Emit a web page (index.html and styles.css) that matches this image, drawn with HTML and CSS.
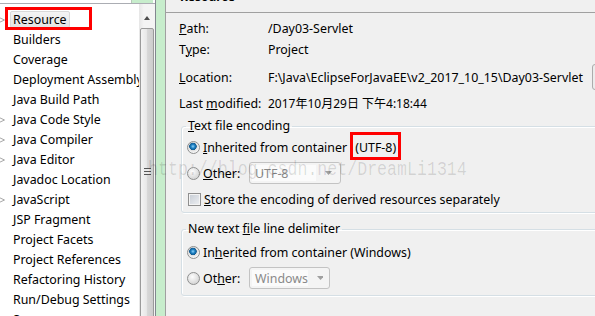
FILE: index.html
```html
<!DOCTYPE html>
<html lang="en">
<head>
    <meta charset="UTF-8">
    <title>Properties for Day03-Servlet</title>
    <link rel="stylesheet" href="styles.css">
</head>
<body>
    <div class="window">
        <!-- Property page tree -->
        <div class="tree-pane">
            <div class="filter"><span class="filter-btn"></span></div>
            <div class="tree-body">
                <ul class="tree">
                    <li class="tree-item">
                        <span class="twisty"><svg width="13" height="20"><polygon points="-3,7.5 4.5,11 -3,14.5" fill="#fff" stroke="#a8a8a8"/></svg></span>
                        <span class="label selected">Resource</span>
                        <span class="mark mark-tree"></span>
                    </li>
                    <li class="tree-item"><span class="twisty"></span><span class="label">Builders</span></li>
                    <li class="tree-item"><span class="twisty"></span><span class="label">Coverage</span></li>
                    <li class="tree-item"><span class="twisty"></span><span class="label">Deployment Assembly</span></li>
                    <li class="tree-item"><span class="twisty"></span><span class="label">Java Build Path</span></li>
                    <li class="tree-item">
                        <span class="twisty"><svg width="13" height="20"><polygon points="-3,7.5 4.5,11 -3,14.5" fill="#fff" stroke="#a8a8a8"/></svg></span>
                        <span class="label">Java Code Style</span>
                    </li>
                    <li class="tree-item">
                        <span class="twisty"><svg width="13" height="20"><polygon points="-3,7.5 4.5,11 -3,14.5" fill="#fff" stroke="#a8a8a8"/></svg></span>
                        <span class="label">Java Compiler</span>
                    </li>
                    <li class="tree-item">
                        <span class="twisty"><svg width="13" height="20"><polygon points="-3,7.5 4.5,11 -3,14.5" fill="#fff" stroke="#a8a8a8"/></svg></span>
                        <span class="label">Java Editor</span>
                    </li>
                    <li class="tree-item"><span class="twisty"></span><span class="label">Javadoc Location</span></li>
                    <li class="tree-item">
                        <span class="twisty"><svg width="13" height="20"><polygon points="-3,7.5 4.5,11 -3,14.5" fill="#fff" stroke="#a8a8a8"/></svg></span>
                        <span class="label">JavaScript</span>
                    </li>
                    <li class="tree-item"><span class="twisty"></span><span class="label">JSP Fragment</span></li>
                    <li class="tree-item"><span class="twisty"></span><span class="label">Project Facets</span></li>
                    <li class="tree-item"><span class="twisty"></span><span class="label">Project References</span></li>
                    <li class="tree-item"><span class="twisty"></span><span class="label">Refactoring History</span></li>
                    <li class="tree-item"><span class="twisty"></span><span class="label">Run/Debug Settings</span></li>
                    <li class="tree-item"><span class="twisty"></span><span class="label">Server</span></li>
                </ul>
                <div class="scrollbar">
                    <div class="scroll-up">
                        <svg width="16" height="18"><polygon points="5,11 11,11 8,7" fill="#4d4d4d"/></svg>
                    </div>
                    <div class="scroll-thumb"><span class="grip"></span></div>
                </div>
            </div>
        </div>

        <div class="gutter"></div>

        <!-- Resource property page -->
        <div class="page">
            <div class="page-title"><h2>Resource</h2></div>

            <div class="info">
                <span class="info-label"><u>P</u>ath:</span>
                <span class="info-value">/Day03-Servlet</span>
                <span class="info-label">T<u>y</u>pe:</span>
                <span class="info-value">Project</span>
                <span class="info-label"><u>L</u>ocation:</span>
                <span class="info-value">F:\Java\EclipseForJavaEE\v2_2017_10_15\Day03-Servlet<span class="side-button"></span></span>
                <span class="info-label">Last <u>m</u>odified:</span>
                <span class="info-value date">2017年10月29日 下午4:18:44</span>
            </div>

            <fieldset class="group group-encoding">
                <legend><u>T</u>ext file encoding</legend>
                <div class="option">
                    <span class="radio checked"></span>
                    <span><u>I</u>nherited from container <span class="mark mark-inline">(UTF-8)</span></span>
                </div>
                <div class="option">
                    <span class="radio"></span>
                    <span class="opt-label"><u>O</u>ther:</span>
                    <span class="combo combo-utf"><span class="combo-text">UTF-8</span><svg width="10" height="6"><polygon points="1,1 8,1 4.5,5" fill="#a0a0a0"/></svg></span>
                </div>
                <div class="option">
                    <span class="checkbox"></span>
                    <span><u>S</u>tore the encoding of derived resources separately</span>
                </div>
            </fieldset>

            <fieldset class="group group-delimiter">
                <legend>New text <u>f</u>ile line delimiter</legend>
                <div class="option">
                    <span class="radio checked"></span>
                    <span>In<u>h</u>erited from container (Windows)</span>
                </div>
                <div class="option">
                    <span class="radio"></span>
                    <span class="opt-label">Ot<u>h</u>er:</span>
                    <span class="combo combo-win"><span class="combo-text">Windows</span><svg width="10" height="6"><polygon points="1,1 8,1 4.5,5" fill="#a0a0a0"/></svg></span>
                </div>
            </fieldset>
        </div>

        <div class="watermark">http://blog.csdn.net/DreamLi1314</div>
    </div>
</body>
</html>
```

FILE: styles.css
```css
body {
    margin: 0;
    font-family: "Noto Sans", "Noto Sans CJK SC", sans-serif;
    font-size: 12.4px;
    color: #000;
}
.window {
    position: relative;
    display: flex;
    width: 595px;
    height: 316px;
    overflow: hidden;
    background: #f0f0f0;
}

/* left tree */
.tree-pane {
    width: 155px;
    flex: none;
    display: flex;
    flex-direction: column;
    background: #fff;
    border-right: 1px solid #828790;
}
.filter {
    position: relative;
    height: 3px;
    border-bottom: 1px solid #abadb3;
}
.filter-btn {
    position: absolute;
    right: 2px;
    top: 0;
    width: 21px;
    height: 3px;
    background: #c7edcc;
    border-left: 1px solid #b8c8bb;
}
.tree-body {
    flex: 1;
    display: flex;
    min-height: 0;
}
.tree {
    flex: 1;
    list-style: none;
    margin: 0;
    padding: 5px 0 0;
    overflow: hidden;
}
.tree-item {
    position: relative;
    display: flex;
    align-items: center;
    height: 20px;
    white-space: nowrap;
}
.twisty {
    width: 13px;
    height: 20px;
    flex: none;
}
.twisty svg {
    display: block;
}
.label.selected {
    margin-left: -3px;
    padding: 0 2px;
    line-height: 15px;
    border: 1px solid #d9d9d9;
    border-radius: 2px;
    background: linear-gradient(#f4f4f4, #e4e4e4);
}
.scrollbar {
    width: 16px;
    flex: none;
    display: flex;
    flex-direction: column;
    padding-top: 5px;
    background: linear-gradient(to right, #e6e6e6, #f4f4f4 30%, #f4f4f4);
}
.scroll-up {
    height: 18px;
}
.scroll-up svg {
    display: block;
}
.scroll-thumb {
    flex: 1;
    margin: 1px 1px -20px;
    border: 1px solid #9a9a9a;
    border-radius: 2px;
    background: linear-gradient(to right, #f3f3f3, #e8e8e8 45%, #d6d6d6 55%, #cdcdcd);
    display: flex;
    justify-content: center;
    padding-top: 139px;
}
.grip {
    width: 7px;
    height: 5px;
    border-top: 1px solid #555;
    border-bottom: 1px solid #555;
    background: linear-gradient(#e8e8e8 2px, #555 2px, #555 3px, #e8e8e8 3px);
}

.gutter {
    width: 9px;
    flex: none;
    background: #c7edcc;
    border-right: 1px solid #a0a0a0;
}

/* right page */
.page {
    flex: 1;
    min-width: 0;
    overflow: hidden;
    white-space: nowrap;
}
.page-title {
    height: 12px;
    overflow: hidden;
    border-bottom: 1px solid #a0a0a0;
}
.page-title h2 {
    margin: -11px 0 0 14px;
    font-size: 12px;
    line-height: 16px;
}
.info {
    display: grid;
    grid-template-columns: 89px auto;
    grid-template-rows: 20px 22px 34px 18px;
    align-items: center;
    margin-top: 5px;
    padding-left: 13px;
}
.info-value {
    display: flex;
    align-items: center;
}
.info-value.date {
    font-size: 12px;
}
.side-button {
    width: 20px;
    height: 24px;
    margin-left: 9px;
    border: 1px solid #acacac;
    border-radius: 3px;
    background: #ececec;
}
.group {
    margin: 6px -30px 0 15px;
    padding: 0 0 0 5px;
    border: 1px solid #d5dfe5;
    border-radius: 3px;
    box-shadow: inset 1px 1px 0 #fff, 1px 1px 0 #fff;
}
.group legend {
    margin-left: -1px;
    padding: 0 2px;
    line-height: 16px;
}
.group-delimiter {
    margin-top: 8px;
    padding-top: 2px;
    padding-bottom: 4px;
}
.option {
    display: flex;
    align-items: center;
    height: 26px;
}
.radio {
    width: 11px;
    height: 11px;
    margin-right: 3px;
    flex: none;
    border: 1px solid #8e8f8f;
    border-radius: 50%;
    background: radial-gradient(circle at 40% 35%, #fdfdfd, #d8d8d8 70%, #cfcfcf);
}
.radio.checked {
    background: radial-gradient(circle at 45% 40%, #8fd3f8 0, #1b7ec2 2px, #145b8f 3.5px, #dedede 4px, #f5f5f5 6px);
}
.checkbox {
    width: 11px;
    height: 11px;
    margin: 0 3px 0 1px;
    flex: none;
    border: 1px solid #8f8f8f;
    box-shadow: inset 0 0 0 1px #f4f4f4;
    background: linear-gradient(135deg, #c6ccd4, #eef0f3);
}
.opt-label {
    width: 46px;
}
.combo {
    display: flex;
    align-items: center;
    height: 22px;
    box-sizing: border-box;
    padding: 2px 6px 2px 2px;
    border: 1px solid #c3c3c3;
    border-radius: 3px;
    background: #f4f4f4;
    color: #8a8a8a;
}
.combo-utf {
    width: 92px;
}
.combo-win {
    width: 81px;
}
.combo-text {
    flex: 1;
    align-self: stretch;
    display: flex;
    align-items: center;
    padding-left: 3px;
    margin-right: 8px;
    background: #fbfbfb;
}

/* red annotation boxes */
.mark {
    border: 3px solid #f00;
}
.mark-tree {
    position: absolute;
    left: 5px;
    top: -2px;
    width: 87px;
    height: 23px;
    box-sizing: border-box;
}
.mark-inline {
    padding: 4px 2px 1px;
}

.watermark {
    position: absolute;
    left: 148px;
    top: 160px;
    font-family: "Liberation Mono", monospace;
    font-size: 20px;
    line-height: 20px;
    color: rgba(0, 0, 0, 0.13);
    transform: scaleX(0.83);
    transform-origin: left top;
    white-space: nowrap;
    pointer-events: none;
}
```
